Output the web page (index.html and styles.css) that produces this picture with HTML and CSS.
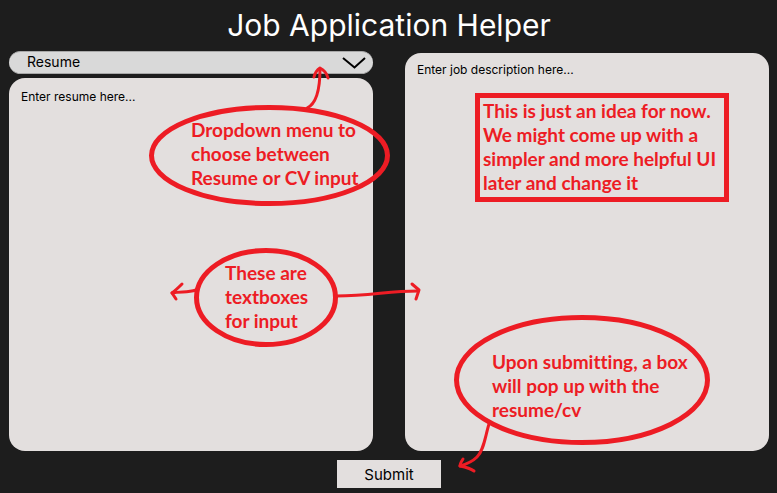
FILE: index.html
```html
<!DOCTYPE html>
<html lang="en">
<head>
<meta charset="utf-8">
<meta name="viewport" content="width=device-width, initial-scale=1">
<title>Job Application Helper</title>
<link rel="stylesheet" href="styles.css">
</head>
<body>
<form class="app">
  <h1 class="title">Job Application Helper</h1>
  <main class="columns">
    <section class="column">
      <div class="picker">
        <select class="picker-select" aria-label="Document type">
          <option>Resume</option>
          <option>CV</option>
        </select>
        <svg class="picker-arrow" viewBox="0 0 24 12" aria-hidden="true"><path d="M1 1 L12.500 10.500 L23 1"/></svg>
      </div>
      <textarea class="box box-resume" aria-label="Resume" placeholder="Enter resume here..."></textarea>
    </section>
    <section class="column column-job">
      <textarea class="box" aria-label="Job description" placeholder="Enter job description here..."></textarea>
    </section>
  </main>
  <button class="submit" type="button">Submit</button>
</form>

<div class="notes">
  <svg class="ink" viewBox="0 0 777 493" aria-hidden="true">
    <g class="ring">
      <ellipse cx="269.500" cy="155.500" rx="118" ry="48"/>
      <ellipse cx="266" cy="297.500" rx="69.500" ry="47"/>
      <ellipse cx="582" cy="380" rx="125.500" ry="62.500"/>
      <rect x="477.500" y="95.500" width="249" height="104"/>
    </g>
    <g class="arrow">
      <path d="M307 108 C316 104 320 92 320 69"/>
      <path d="M314 77 C315 73 317 70 320 68 C324 70 327 74 328 78"/>
      <path d="M196 290 C187 293 181 291 172 293"/>
      <path d="M182 284 C179 287 176 290 172 293 L176 299"/>
      <path d="M336 296 C372 296 387 291 418 291"/>
      <path d="M412 284 L419 290 L416 299"/>
      <path d="M489 424 C485 437 484 450 477 457 C472 462 467 464 460 466"/>
      <path d="M463 459 C461 462 460 464 460 466 C465 467 470 468 474 471"/>
    </g>
  </svg>
  <p class="note note-menu">Dropdown menu to<br>choose between<br>Resume or CV input</p>
  <p class="note note-boxes">These are<br>textboxes<br>for input</p>
  <p class="note note-idea">This is just an idea for now.<br>We might come up with a<br>simpler and more helpful UI<br>later and change it</p>
  <p class="note note-submit">Upon submitting, a box<br>will pop up with the<br>resume/cv</p>
</div>
</body>
</html>
```
FILE: styles.css
```css
* {
  box-sizing: border-box;
}

body {
  margin: 0;
  background: #1d1d1d;
  font-family: Inter, "Liberation Sans", sans-serif;
}

.app {
  display: flex;
  flex-direction: column;
  min-height: 100vh;
  padding: 5px 8px 5px 9px;
}

.title {
  margin: 0 0 5px;
  color: #fff;
  font-size: 30px;
  font-weight: 400;
  line-height: 41px;
  text-align: center;
}

.columns {
  display: grid;
  flex: 1;
  grid-template-columns: 1fr 1fr;
  gap: 32px;
}

.column {
  display: flex;
  flex-direction: column;
  gap: 4px;
}

.column-job {
  padding-top: 2px;
}

.picker {
  position: relative;
  display: flex;
}

.picker-select {
  flex: 1;
  height: 23px;
  padding: 0 40px 2px 18px;
  appearance: none;
  border: 1px solid #a8a8a8;
  border-width: 1px 0;
  border-radius: 12px;
  background: #d9d9d9;
  color: #000;
  font: 14px Inter, "Liberation Sans", sans-serif;
}

.picker-arrow {
  position: absolute;
  top: 6px;
  right: 7px;
  width: 24px;
  height: 12px;
  fill: none;
  stroke: #000;
  stroke-width: 2;
  pointer-events: none;
}

.box {
  flex: 1;
  padding: 9px 12px;
  border: 0;
  border-radius: 16px;
  background: #e3dfde;
  color: #000;
  font: 12px/16px Inter, "Liberation Sans", sans-serif;
  resize: none;
}

.box-resume {
  padding-top: 11px;
}

.box::placeholder {
  color: #000;
  opacity: 1;
}

.submit {
  align-self: center;
  height: 28px;
  margin-top: 9px;
  padding: 0 27px;
  border: 0;
  background: #e3dfde;
  color: #000;
  font: 15px Inter, "Liberation Sans", sans-serif;
}

.notes {
  position: absolute;
  top: 0;
  left: 0;
  pointer-events: none;
}

.ink {
  display: block;
  width: 777px;
  height: 493px;
  fill: none;
  stroke: #ed1c24;
}

.ring {
  stroke-width: 5;
}

.arrow {
  stroke-width: 3;
  stroke-linecap: round;
  stroke-linejoin: round;
}

.note {
  position: absolute;
  margin: 0;
  color: #ed1c24;
  font: 700 19px/24px Lato, "Liberation Sans", sans-serif;
  font-variant-ligatures: none;
  white-space: nowrap;
}

.note-menu {
  top: 118px;
  left: 191px;
}

.note-boxes {
  top: 261px;
  left: 225px;
}

.note-idea {
  top: 99px;
  left: 483px;
}

.note-submit {
  top: 350px;
  left: 492px;
}
```
